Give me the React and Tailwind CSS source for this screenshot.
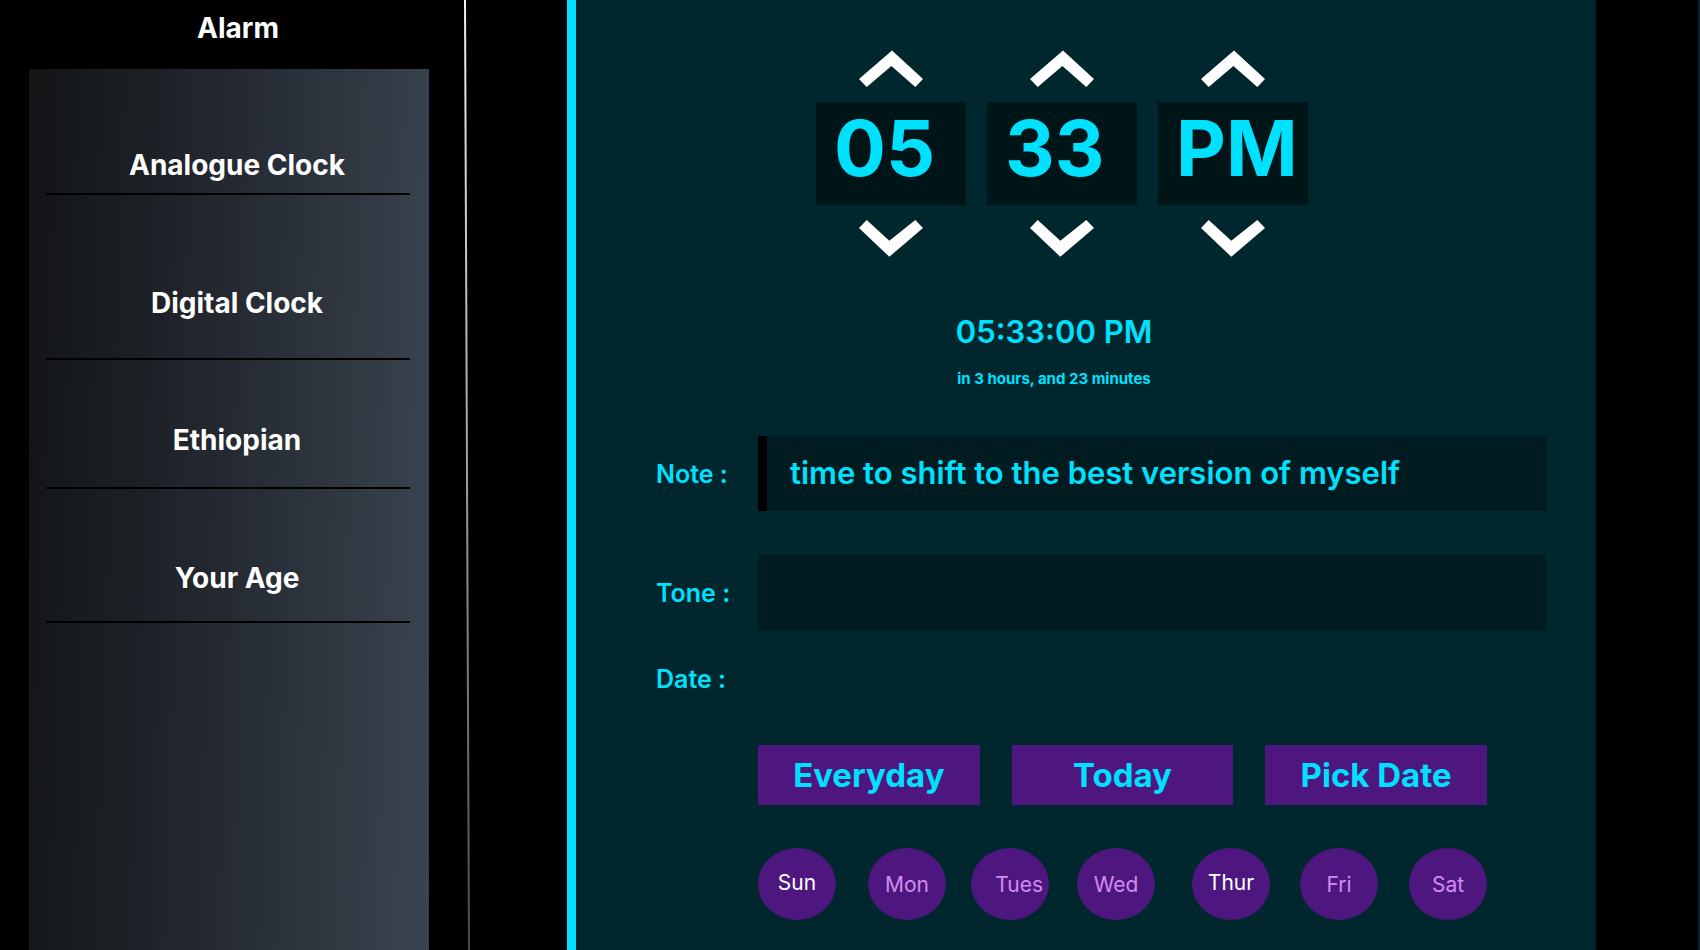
import { useState } from "react";

const menu = [
  { label: "Analogue Clock", spacing: "pt-[78px] pb-2.5" },
  { label: "Digital Clock", spacing: "pt-[90px] pb-[37px]" },
  { label: "Ethiopian", spacing: "pt-[62px] pb-[29px]" },
  { label: "Your Age", spacing: "pt-[71px] pb-[25px]" },
];

const units = [
  { name: "hour", value: "05" },
  { name: "minute", value: "33" },
  { name: "period", value: "PM" },
];

const days = [
  { label: "Sun" },
  { label: "Mon" },
  { label: "Tues", align: "justify-end pr-1.5" },
  { label: "Wed" },
  { label: "Thur" },
  { label: "Fri" },
  { label: "Sat" },
];

function Sidebar() {
  return (
    <aside className="flex w-[429px] shrink-0 flex-col pl-[29px]">
      <h1 className="flex h-[69px] items-start justify-center pt-2.5 pl-[18px] text-[28px] leading-9 font-bold text-white">
        Alarm
      </h1>
      <nav className="grow bg-linear-[92deg] from-[#121416] via-[#252a32] to-[#3a4450] pr-[19px] pl-[17px]">
        <ul>
          {menu.map((item) => (
            <li key={item.label} className="border-b-2 border-black">
              <a
                href="#"
                className={`block pl-[18px] text-center text-[28px] leading-9 font-bold text-white ${item.spacing}`}
              >
                {item.label}
              </a>
            </li>
          ))}
        </ul>
      </nav>
    </aside>
  );
}

function Divider() {
  return (
    <svg
      className="mr-24 ml-[34px] w-2 shrink-0 self-stretch"
      viewBox="0 0 8 950"
      preserveAspectRatio="none"
      aria-hidden="true"
    >
      <defs>
        <linearGradient id="fade" x1="0" y1="0" x2="0" y2="1">
          <stop offset="0" stopColor="#f2f2f2" />
          <stop offset="1" stopColor="#484848" />
        </linearGradient>
      </defs>
      <polygon points="1,0 3,0 7,950 5,950" fill="url(#fade)" />
    </svg>
  );
}

function Chevron({ up }) {
  return (
    <svg className="h-[37px] w-16" viewBox="0 0 64 37" fill="white" aria-hidden="true">
      {up ? (
        <polygon points="33,0.4 64,29 56.3,37 32.4,16 7.7,37 0,29" />
      ) : (
        <polygon points="7.7,0 30.3,20.7 56.3,0 64,8 30.3,36.8 0,8" />
      )}
    </svg>
  );
}

function TimePicker() {
  return (
    <div className="flex gap-[21px]">
      {units.map((unit) => (
        <div key={unit.name} className="flex w-[150px] flex-col items-center gap-[15px]">
          <button type="button" aria-label={`Next ${unit.name}`}>
            <Chevron up />
          </button>
          <div className="h-[103px] w-full bg-[#001518] pl-[18px] text-[77px] leading-[92px] font-bold whitespace-nowrap">
            {unit.value}
          </div>
          <button type="button" aria-label={`Previous ${unit.name}`}>
            <Chevron />
          </button>
        </div>
      ))}
    </div>
  );
}

export default function App() {
  const [selected, setSelected] = useState(["Sun", "Thur"]);
  const toggle = (day) =>
    setSelected((list) => (list.includes(day) ? list.filter((d) => d !== day) : [...list, day]));

  return (
    <div className="flex min-h-screen border-r-2 border-[#002338] bg-black font-['Inter',sans-serif]">
      <Sidebar />
      <Divider />
      <main className="mr-[102px] min-w-0 grow border-l-[9px] border-[#00e1ff] bg-[#00272d] pt-[50px] pr-[50px] pb-7 pl-20 text-[#00e1ff]">
        <section className="flex flex-col items-center pr-[78px]">
          <TimePicker />
          <p className="mt-[57px] pr-4 text-[31px] leading-9 font-semibold">05:33:00 PM</p>
          <p className="mt-[19px] pr-4 text-[15px] leading-5 font-bold">in 3 hours, and 23 minutes</p>
        </section>

        <form className="mt-[47px] grid grid-cols-[102px_1fr] items-center">
          <label htmlFor="note" className="text-[25px] leading-9 font-semibold">
            Note :
          </label>
          <input
            id="note"
            type="text"
            defaultValue="time to shift to the best version of myself"
            className="h-[75px] w-full border-l-[9px] border-black bg-[#001c21] pr-4 pb-0.5 pl-[23px] text-[31px] font-semibold outline-none"
          />
          <label htmlFor="tone" className="mt-11 text-[25px] leading-9 font-semibold">
            Tone :
          </label>
          <input
            id="tone"
            type="text"
            className="mt-11 h-[75px] w-full bg-[#001c21] px-8 text-[31px] font-semibold outline-none"
          />
          <h2 className="col-span-2 mt-[31px] text-[25px] leading-9 font-semibold">Date :</h2>
          <div className="col-start-2 mt-12 mr-[59px] grid grid-cols-3 gap-8">
            {["Everyday", "Today", "Pick Date"].map((label) => (
              <button
                key={label}
                type="button"
                className="h-[60px] bg-[#4e1780] text-[33px] leading-10 font-bold"
              >
                {label}
              </button>
            ))}
          </div>
          <div className="col-start-2 mt-[43px] mr-[59px] grid grid-cols-[110fr_103fr_106fr_115fr_108fr_109fr_78fr]">
            {days.map((day) => {
              const on = selected.includes(day.label);
              return (
                <button
                  key={day.label}
                  type="button"
                  aria-pressed={on}
                  onClick={() => toggle(day.label)}
                  className={`flex h-[72px] w-[78px] items-center rounded-[50%] bg-[#4e1780] text-[21px] leading-7 ${
                    on ? "pb-0.5 text-white" : "pt-0.5 text-[#d38bf0]"
                  } ${day.align ?? "justify-center"}`}
                >
                  {day.label}
                </button>
              );
            })}
          </div>
        </form>
      </main>
    </div>
  );
}
